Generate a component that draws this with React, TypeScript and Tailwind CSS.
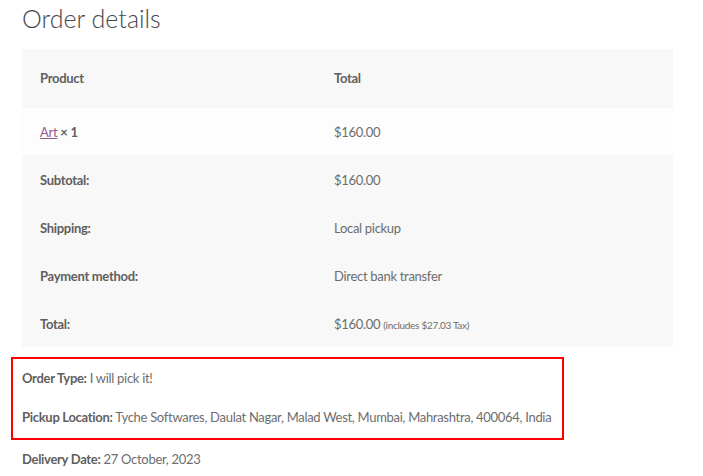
import React from "react";

const rows = [
  { label: "Subtotal:", value: "$160.00" },
  { label: "Shipping:", value: "Local pickup" },
  { label: "Payment method:", value: "Direct bank transfer" },
];

const App = () => {
  return (
    <div className="w-[703px] h-[476px] overflow-hidden bg-white px-[22px] pt-[2px] font-['Lato',sans-serif] text-[13px] tracking-[-0.3px] text-[#6d6d6d]">
      <h2 className="text-[25px] font-light leading-[32px] tracking-normal text-[#43454b]">
        Order details
      </h2>

      <table className="mt-[15px] w-[651px] border-collapse text-left">
        <thead>
          <tr className="h-[59px] bg-[#f8f8f8]">
            <th className="w-[312px] pl-[18px] font-bold text-[#5f5f5f]">Product</th>
            <th className="font-bold text-[#5f5f5f]">Total</th>
          </tr>
        </thead>
        <tbody>
          <tr className="h-[47px] bg-[#fdfdfd]">
            <td className="pl-[18px] pt-[2px]">
              <a href="#" className="text-[#96588a] underline">
                Art
              </a>{" "}
              <strong className="font-bold text-[#5f5f5f]">× 1</strong>
            </td>
            <td className="pt-[2px]">$160.00</td>
          </tr>
        </tbody>
        <tfoot className="bg-[#f8f8f8]">
          {rows.map((row) => (
            <tr key={row.label} className="h-[48px]">
              <th className="pl-[18px] pt-[4px] font-bold text-[#5f5f5f]">{row.label}</th>
              <td className="pt-[4px]">{row.value}</td>
            </tr>
          ))}
          <tr className="h-[48px]">
            <th className="pl-[18px] pt-[4px] font-bold text-[#5f5f5f]">Total:</th>
            <td className="pt-[4px]">
              $160.00 <small className="text-[10px]">(includes $27.03 Tax)</small>
            </td>
          </tr>
        </tfoot>
      </table>

      <div className="ml-[-11px] mt-[10px] w-[553px] border-2 border-[#f00] pl-[9px] pt-[10px] pb-[12px]">
        <p className="whitespace-nowrap leading-[18px]">
          <strong className="font-bold text-[#5f5f5f]">Order Type:</strong> I will pick it!
        </p>
        <p className="mt-[21px] whitespace-nowrap leading-[18px]">
          <strong className="font-bold text-[#5f5f5f]">Pickup Location:</strong> Tyche Softwares, Daulat Nagar, Malad
          West, Mumbai, Mahrashtra, 400064, India
        </p>
      </div>

      <p className="mt-[10px] whitespace-nowrap leading-[18px]">
        <strong className="font-bold text-[#5f5f5f]">Delivery Date:</strong> 27 October, 2023
      </p>
    </div>
  );
};

export default App;
